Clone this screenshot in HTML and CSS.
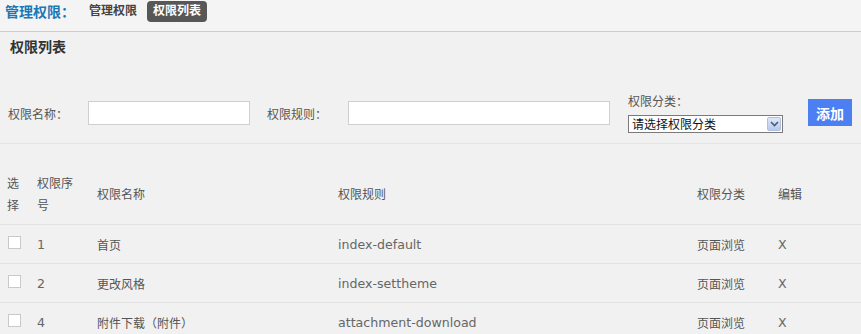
FILE: index.html
```html
<!DOCTYPE html>
<html lang="zh-CN">
<head>
    <meta charset="UTF-8">
    <meta name="viewport" content="width=device-width, initial-scale=1.0">
    <title>管理权限 - 权限列表</title>
    <link rel="stylesheet" href="styles.css">
</head>
<body>
    <div class="topbar">
        <span class="topbar-title">管理权限：</span>
        <a class="tab" href="#">管理权限</a>
        <a class="tab tab-active" href="#">权限列表</a>
    </div>

    <h2 class="section-title">权限列表</h2>

    <form class="add-form">
        <label class="field-label label-name">权限名称：</label>
        <input type="text" class="field-input input-name">
        <label class="field-label label-rule">权限规则：</label>
        <input type="text" class="field-input input-rule">
        <div class="field-stack">
            <label class="field-label">权限分类：</label>
            <div class="select-wrap">
                <select class="field-select">
                    <option>请选择权限分类</option>
                    <option>页面浏览</option>
                </select>
                <span class="select-arrow">
                    <svg width="9" height="6" viewBox="0 0 9 6"><path d="M1 1 L4.5 4.5 L8 1" fill="none" stroke="#4a5a78" stroke-width="1.6"/></svg>
                </span>
            </div>
        </div>
        <button type="submit" class="add-btn">添加</button>
    </form>

    <table class="perm-table">
        <colgroup>
            <col style="width:30px">
            <col style="width:60px">
            <col style="width:241px">
            <col style="width:359px">
            <col style="width:81px">
            <col style="width:90px">
        </colgroup>
        <thead>
            <tr>
                <th>选<br>择</th>
                <th>权限序<br>号</th>
                <th>权限名称</th>
                <th>权限规则</th>
                <th>权限分类</th>
                <th>编辑</th>
            </tr>
        </thead>
        <tbody>
            <tr>
                <td><input type="checkbox" class="check"></td>
                <td class="latin">1</td>
                <td>首页</td>
                <td class="latin">index-default</td>
                <td>页面浏览</td>
                <td class="latin">X</td>
            </tr>
            <tr>
                <td><input type="checkbox" class="check"></td>
                <td class="latin">2</td>
                <td>更改风格</td>
                <td class="latin">index-settheme</td>
                <td>页面浏览</td>
                <td class="latin">X</td>
            </tr>
            <tr>
                <td><input type="checkbox" class="check"></td>
                <td class="latin">4</td>
                <td>附件下载（附件）</td>
                <td class="latin">attachment-download</td>
                <td>页面浏览</td>
                <td class="latin">X</td>
            </tr>
        </tbody>
    </table>
</body>
</html>
```

FILE: styles.css
```css
body {
    margin: 0;
    background: #f1f1f1;
    font-family: "Liberation Sans", "Noto Sans CJK SC", sans-serif;
    font-size: 12px;
    color: #555;
}
.topbar {
    display: flex;
    align-items: center;
    height: 22px;
    padding: 0 5px 9px;
    background: #f4f4f4;
    border-bottom: 1px solid #cdcdcd;
}
.topbar-title {
    font-size: 14px;
    font-weight: bold;
    color: #1b78b6;
    margin-right: 8px;
}
.tab {
    font-weight: bold;
    color: #444;
    text-decoration: none;
    margin-right: 4px;
    padding: 3px 6px;
    line-height: 15px;
    border-radius: 4px;
}
.tab-active {
    background: #575757;
    color: #fff;
}
.section-title {
    margin: 0;
    padding: 7px 10px 0;
    font-size: 14px;
    line-height: 16px;
    font-weight: bold;
    color: #333;
}
.add-form {
    display: flex;
    align-items: center;
    height: 38px;
    padding: 40px 8px 10px;
    border-bottom: 1px solid #e4e4e4;
}
.field-label {
    color: #555;
    white-space: nowrap;
    flex-shrink: 0;
    margin-bottom: 2px;
}
.label-name {
    width: 80px;
}
.label-rule {
    width: 81px;
}
.field-input {
    flex-shrink: 0;
    height: 24px;
    box-sizing: border-box;
    border: 1px solid #cfcfcf;
    background: #fff;
    margin: 0 17px 3px 0;
    padding: 0 4px;
}
.input-name {
    width: 162px;
}
.input-rule {
    width: 262px;
    margin-right: 18px;
}
.field-stack {
    display: flex;
    flex-direction: column;
    gap: 6px;
    margin-right: 25px;
}
.field-stack .field-label {
    margin: 0;
    line-height: 14px;
}
.select-wrap {
    position: relative;
    width: 155px;
    height: 18px;
}
.field-select {
    appearance: none;
    width: 100%;
    height: 100%;
    box-sizing: border-box;
    border: 1px solid #7a7a7a;
    background: #fff;
    font-family: "Noto Sans CJK SC", sans-serif;
    font-size: 12px;
    line-height: 14px;
    color: #111;
    padding: 0 3px;
    margin: 0;
}
.select-arrow {
    position: absolute;
    right: 2px;
    top: 2px;
    width: 14px;
    height: 14px;
    display: flex;
    align-items: center;
    justify-content: center;
    background: linear-gradient(#dfe8fa, #b9c9ec);
    border: 1px solid #b0bfdf;
    box-sizing: border-box;
    border-radius: 2px;
}
.add-btn {
    flex-shrink: 0;
    width: 44px;
    height: 27px;
    border: none;
    background: #4c7ff2;
    color: #fff;
    font-family: "Noto Sans CJK SC", sans-serif;
    font-size: 14px;
    font-weight: bold;
    padding: 0;
    margin-bottom: 3px;
    cursor: pointer;
}
.perm-table {
    width: 861px;
    table-layout: fixed;
    border-collapse: collapse;
    margin-top: 21px;
}
.perm-table th,
.perm-table td {
    text-align: left;
    font-weight: normal;
    color: #555;
    padding: 0 7px;
    border-bottom: 1px solid #e2e2e2;
    white-space: nowrap;
}
.perm-table th {
    line-height: 22px;
    padding-top: 8px;
    padding-bottom: 7px;
}
.perm-table td {
    height: 38px;
}
.perm-table td.latin {
    font-family: "DejaVu Sans", sans-serif;
    font-size: 12.6px;
    color: #666;
}
.check {
    appearance: none;
    display: block;
    width: 13px;
    height: 13px;
    margin: -3px 0 0 1px;
    border: 1px solid #c9c9c9;
    background: #fff;
}
```
